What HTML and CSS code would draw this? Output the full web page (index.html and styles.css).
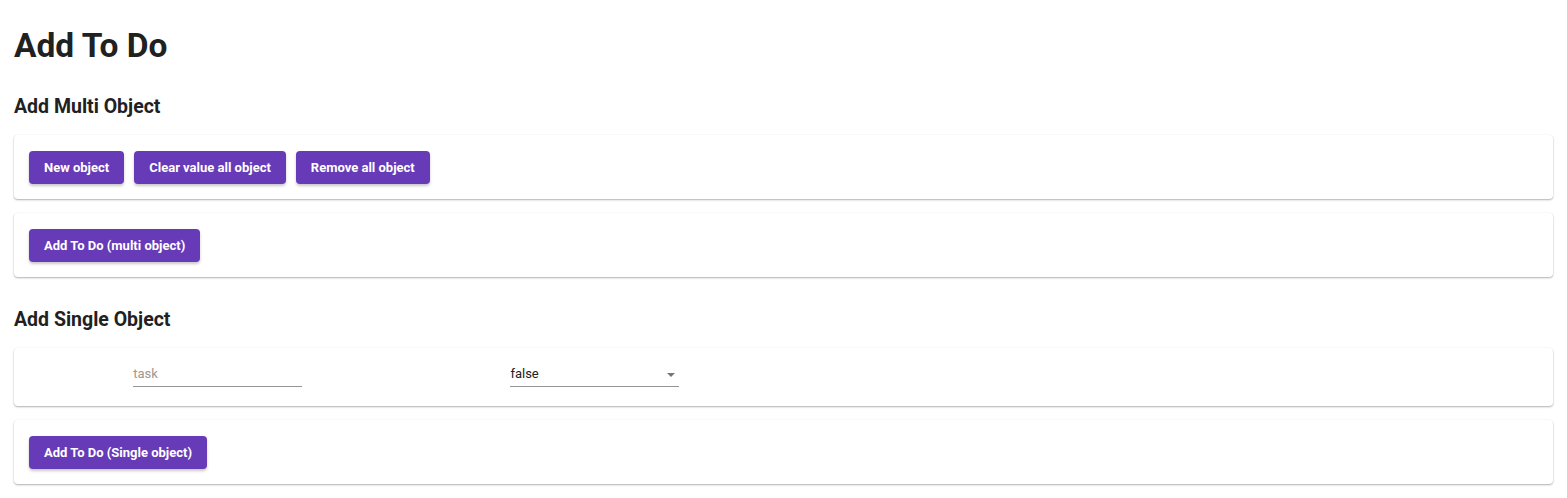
FILE: index.html
```html
<!DOCTYPE html>
<html lang="en">
<head>
<meta charset="utf-8">
<title>Add To Do</title>
<link rel="stylesheet" href="styles.css">
</head>
<body>
<main class="page">
  <h1 class="title">Add To Do</h1>

  <h2 class="section-title">Add Multi Object</h2>
  <div class="card">
    <div class="btn-row">
      <button class="btn">New object</button>
      <button class="btn">Clear value all object</button>
      <button class="btn">Remove all object</button>
    </div>
  </div>
  <div class="card">
    <div class="btn-row">
      <button class="btn">Add To Do (multi object)</button>
    </div>
  </div>

  <h2 class="section-title section-title--second">Add Single Object</h2>
  <div class="card card--fields">
    <div class="field-grid">
      <label class="field">
        <input class="field-input" type="text" placeholder="task">
      </label>
      <div class="field field--select">
        <span class="select-value">false</span>
        <span class="select-arrow"></span>
      </div>
    </div>
  </div>
  <div class="card">
    <div class="btn-row">
      <button class="btn">Add To Do (Single object)</button>
    </div>
  </div>
</main>
</body>
</html>
```

FILE: styles.css
```css
* { box-sizing: border-box; }

html, body {
  margin: 0;
  padding: 0;
  background: #fff;
}

body {
  font-family: Roboto, "Liberation Sans", sans-serif;
  color: #212121;
}

.page {
  padding: 0 14px 14px;
}

.title {
  margin: 27px 0 0;
  font-size: 33.5px;
  line-height: 38px;
  font-weight: 700;
  color: #212121;
}

.section-title {
  margin: 30px 0 16px;
  font-size: 19.5px;
  line-height: 24px;
  font-weight: 700;
  color: #212121;
}

.section-title--second {
  margin-top: 31px;
}

.card {
  background: #fff;
  border-radius: 4px;
  box-shadow: 0 1px 2px rgba(0,0,0,0.30), 0 0 2px rgba(0,0,0,0.06);
  padding: 16px 15px 15px;
  margin-bottom: 14px;
}

.btn-row {
  display: flex;
  gap: 10px;
}

.btn {
  height: 33px;
  padding: 0 15px;
  border: none;
  border-radius: 4px;
  background: #673ab7;
  color: #fff;
  font-family: Roboto, "Liberation Sans", sans-serif;
  font-size: 13px;
  font-weight: 700;
  box-shadow: 0 2px 3px rgba(0,0,0,0.22);
  cursor: pointer;
}

.card--fields {
  padding: 15px 15px 19px;
}

.field-grid {
  display: grid;
  grid-template-columns: repeat(4, 1fr);
  justify-items: center;
}

.field {
  display: flex;
  align-items: flex-end;
  width: 169px;
  height: 24px;
  padding-bottom: 5px;
  border-bottom: 1px solid #949494;
}

.field-input {
  width: 100%;
  height: 15px;
  border: none;
  outline: none;
  padding: 0;
  margin: 0;
  background: transparent;
  font-family: Roboto, "Liberation Sans", sans-serif;
  font-size: 13px;
  line-height: 15px;
  color: #212121;
}

.field-input::placeholder {
  color: #a0968c;
}

.field--select {
  justify-content: space-between;
  font-size: 13px;
  line-height: 15px;
  color: #212121;
}

.select-arrow {
  width: 0;
  height: 0;
  margin: 0 4px 4px 0;
  border-left: 4px solid transparent;
  border-right: 4px solid transparent;
  border-top: 4px solid #757575;
}
```
